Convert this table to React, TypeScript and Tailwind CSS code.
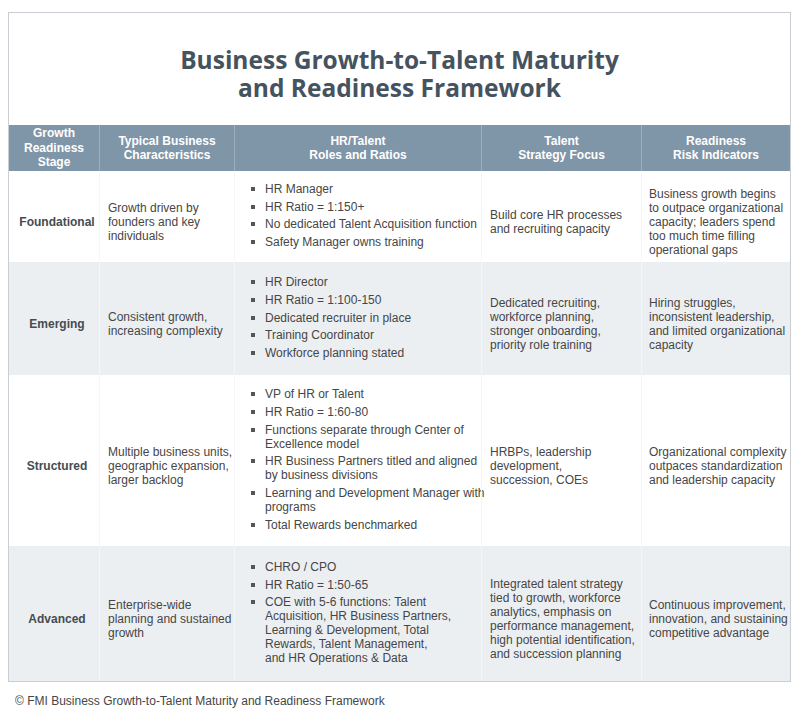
import React from "react";

type Row = {
  stage: string;
  chars: string[];
  roles: string[][];
  focus: string[];
  risk: string[];
  h: string;
  bg: string;
};

const rows: Row[] = [
  {
    stage: "Foundational",
    chars: ["Growth driven by", "founders and key", "individuals"],
    roles: [
      ["HR Manager"],
      ["HR Ratio = 1:150+"],
      ["No dedicated Talent Acquisition function"],
      ["Safety Manager owns training"],
    ],
    focus: ["Build core HR processes", "and recruiting capacity"],
    risk: [
      "Business growth begins",
      "to outpace organizational",
      "capacity; leaders spend",
      "too much time filling",
      "operational gaps",
    ],
    h: "h-[91px]",
    bg: "bg-white",
  },
  {
    stage: "Emerging",
    chars: ["Consistent growth,", "increasing complexity"],
    roles: [
      ["HR Director"],
      ["HR Ratio = 1:100-150"],
      ["Dedicated recruiter in place"],
      ["Training Coordinator"],
      ["Workforce planning stated"],
    ],
    focus: [
      "Dedicated recruiting,",
      "workforce planning,",
      "stronger onboarding,",
      "priority role training",
    ],
    risk: [
      "Hiring struggles,",
      "inconsistent leadership,",
      "and limited organizational",
      "capacity",
    ],
    h: "h-[113px]",
    bg: "bg-[#eceff2]",
  },
  {
    stage: "Structured",
    chars: ["Multiple business units,", "geographic expansion,", "larger backlog"],
    roles: [
      ["VP of HR or Talent"],
      ["HR Ratio = 1:60-80"],
      ["Functions separate through Center of", "Excellence model"],
      ["HR Business Partners titled and aligned", "by business divisions"],
      ["Learning and Development Manager with", "programs"],
      ["Total Rewards benchmarked"],
    ],
    focus: ["HRBPs, leadership", "development,", "succession, COEs"],
    risk: [
      "Organizational complexity",
      "outpaces standardization",
      "and leadership capacity",
    ],
    h: "h-[171px]",
    bg: "bg-white",
  },
  {
    stage: "Advanced",
    chars: ["Enterprise-wide", "planning and sustained", "growth"],
    roles: [
      ["CHRO / CPO"],
      ["HR Ratio = 1:50-65"],
      [
        "COE with 5-6 functions: Talent",
        "Acquisition, HR Business Partners,",
        "Learning & Development, Total",
        "Rewards, Talent Management,",
        "and HR Operations & Data",
      ],
    ],
    focus: [
      "Integrated talent strategy",
      "tied to growth, workforce",
      "analytics, emphasis on",
      "performance management,",
      "high potential identification,",
      "and succession planning",
    ],
    risk: [
      "Continuous improvement,",
      "innovation, and sustaining",
      "competitive advantage",
    ],
    h: "h-[135px]",
    bg: "bg-[#eceff2]",
  },
];

function Lines({ lines }: { lines: string[] }) {
  return (
    <div>
      {lines.map((l, i) => (
        <div key={i} className="whitespace-nowrap">
          {l}
        </div>
      ))}
    </div>
  );
}

export default function App() {
  return (
    <div
      className="w-[800px] h-[722px] bg-white text-[12px] leading-[14px] text-[#464646]"
      style={{ fontFamily: '"Liberation Sans", Arial, sans-serif' }}
    >
      <div className="pt-[12px] pl-[8px]">
        <div className="w-[783px] border border-[#c9ced4]">
          <div className="h-[112px] pt-[33px] text-center">
            <div
              className="text-[24.5px] leading-[28px] font-bold text-[#45535f]"
              style={{ fontFamily: '"Open Sans", sans-serif' }}
            >
              <div>Business Growth-to-Talent Maturity</div>
              <div>and Readiness Framework</div>
            </div>
          </div>
          <div className="grid grid-cols-[90px_135px_247px_160px_149px] h-[46px] bg-[#7f95a8] text-white font-bold text-center leading-[14.5px]">
            <div className="flex items-center justify-center">
              <div>
                Growth
                <br />
                Readiness
                <br />
                Stage
              </div>
            </div>
            <div className="flex items-center justify-center border-l border-[#9fafbe]">
              <div>
                Typical Business
                <br />
                Characteristics
              </div>
            </div>
            <div className="flex items-center justify-center border-l border-[#9fafbe]">
              <div>
                HR/Talent
                <br />
                Roles and Ratios
              </div>
            </div>
            <div className="flex items-center justify-center border-l border-[#9fafbe]">
              <div>
                Talent
                <br />
                Strategy Focus
              </div>
            </div>
            <div className="flex items-center justify-center border-l border-[#9fafbe]">
              <div>
                Readiness
                <br />
                Risk Indicators
              </div>
            </div>
          </div>
          {rows.map((r) => (
            <div
              key={r.stage}
              className={`grid grid-cols-[90px_135px_247px_160px_149px] ${r.h} ${r.bg}`}
            >
              <div className="flex items-center justify-center pt-[11px] pl-[6px] font-bold text-[#464b51]">
                {r.stage}
              </div>
              <div className="flex items-center pl-[8px] pt-[11px] border-l border-[#f4f6f8]">
                <Lines lines={r.chars} />
              </div>
              <div className="flex items-center pl-[14px] pb-[2px] border-l border-[#f4f6f8]">
                <div className="flex flex-col gap-[3.7px]">
                  {r.roles.map((item, i) => (
                    <div key={i} className="flex">
                      <div className="w-[16px] shrink-0 pt-[5px] pl-[2px]">
                        <div className="w-[4px] h-[4px] bg-[#555]" />
                      </div>
                      <Lines lines={item} />
                    </div>
                  ))}
                </div>
              </div>
              <div className="flex items-center pl-[8px] pt-[11px] border-l border-[#f4f6f8]">
                <Lines lines={r.focus} />
              </div>
              <div className="flex items-center pl-[7px] pt-[11px] border-l border-[#f4f6f8]">
                <Lines lines={r.risk} />
              </div>
            </div>
          ))}
        </div>
      </div>
      <div className="mt-[12px] pl-[15px]">
        © FMI Business Growth-to-Talent Maturity and Readiness Framework
      </div>
    </div>
  );
}
